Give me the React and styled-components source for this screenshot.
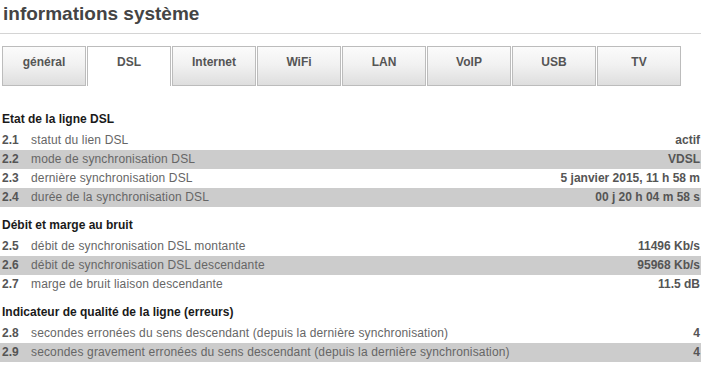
import styled, { createGlobalStyle } from "styled-components"

const GlobalStyle = createGlobalStyle`
  body {
    margin: 0;
    background: #fff;
    font-family: "Liberation Sans", Arial, sans-serif;
  }
`

const tabs = ["général", "DSL", "Internet", "WiFi", "LAN", "VoIP", "USB", "TV"]

const sections = [
  {
    title: "Etat de la ligne DSL",
    rows: [
      ["2.1", "statut du lien DSL", "actif"],
      ["2.2", "mode de synchronisation DSL", "VDSL"],
      ["2.3", "dernière synchronisation DSL", "5 janvier 2015, 11 h 58 m"],
      ["2.4", "durée de la synchronisation DSL", "00 j 20 h 04 m 58 s"],
    ],
  },
  {
    title: "Débit et marge au bruit",
    rows: [
      ["2.5", "débit de synchronisation DSL montante", "11496 Kb/s"],
      ["2.6", "débit de synchronisation DSL descendante", "95968 Kb/s"],
      ["2.7", "marge de bruit liaison descendante", "11.5 dB"],
    ],
  },
  {
    title: "Indicateur de qualité de la ligne (erreurs)",
    rows: [
      ["2.8", "secondes erronées du sens descendant (depuis la dernière synchronisation)", "4"],
      ["2.9", "secondes gravement erronées du sens descendant (depuis la dernière synchronisation)", "4"],
    ],
  },
]

const App = () => {
  return (
    <Page>
      <GlobalStyle />
      <Title>informations système</Title>
      <TabBar>
        {tabs.map((t) => (
          <Tab key={t} active={t === "DSL"}>
            {t}
          </Tab>
        ))}
      </TabBar>
      <Content>
        {sections.map((s) => (
          <Section key={s.title}>
            <Heading>{s.title}</Heading>
            {s.rows.map((r, i) => (
              <Row key={r[0]} striped={i % 2 === 1}>
                <Num>{r[0]}</Num>
                <Label>{r[1]}</Label>
                <Value>{r[2]}</Value>
              </Row>
            ))}
          </Section>
        ))}
      </Content>
    </Page>
  )
}

const Page = styled.div`
  width: 701px;
`

const Title = styled.h1`
  margin: 0;
  padding: 3px 0 8px 3px;
  font-size: 19px;
  line-height: 22px;
  font-weight: bold;
  color: #444;
  border-bottom: 1px solid #d4d4d4;
`

const TabBar = styled.div`
  display: flex;
  gap: 1px;
  margin-top: 12px;
  padding-left: 2px;
`

const Tab = styled.div`
  box-sizing: border-box;
  width: 84px;
  height: 40px;
  padding-top: 8px;
  border: 1px solid #bcbcbc;
  border-bottom: ${(p) => (p.active ? "none" : "1px solid #bcbcbc")};
  background: ${(p) =>
    p.active ? "#fff" : "linear-gradient(to bottom, #fbfbfb 0%, #f2f2f2 45%, #dedede 100%)"};
  text-align: center;
  font-size: 12px;
  line-height: 14px;
  font-weight: bold;
  color: #555;
`

const Content = styled.div`
  display: flex;
  flex-direction: column;
  gap: 9px;
  margin-top: 24px;
`

const Section = styled.div`
  display: flex;
  flex-direction: column;
`

const Heading = styled.div`
  height: 21px;
  padding-left: 2px;
  font-size: 12px;
  line-height: 19px;
  font-weight: bold;
  color: #1a1a1a;
`

const Row = styled.div`
  display: flex;
  height: 19px;
  align-items: center;
  font-size: 12px;
  line-height: 19px;
  background: ${(p) => (p.striped ? "#cccccc" : "transparent")};
`

const Num = styled.span`
  width: 29px;
  padding-left: 2px;
  font-weight: bold;
  color: #555;
`

const Label = styled.span`
  flex: 1;
  color: #666;
  letter-spacing: 0.15px;
`

const Value = styled.span`
  padding-right: 1px;
  font-weight: bold;
  color: #555;
  text-align: right;
`

export default App
